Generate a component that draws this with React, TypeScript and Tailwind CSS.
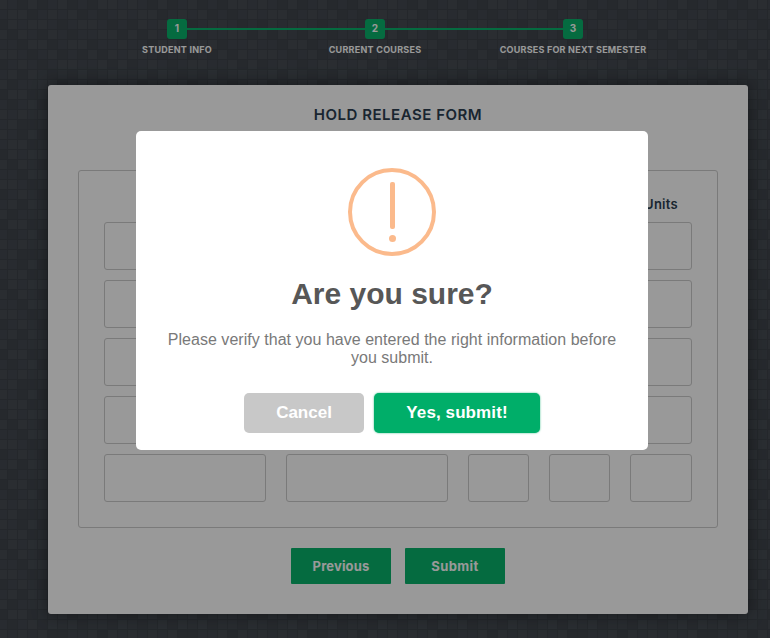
const steps = ['STUDENT INFO', 'CURRENT COURSES', 'COURSES FOR NEXT SEMESTER'];
const labelSpacing = ['tracking-[0.24px]', 'tracking-[0.25px]', 'tracking-[0.23px]'];
const rows = [0, 1, 2, 3, 4];
const fieldWidths = ['w-[162px]', 'w-[162px]', 'w-[61px]', 'w-[61px]', 'w-[62px]'];

// Square fills of the woven backdrop, one digit per 10px tile.
const weave = [
  '2102012010221',
  '1220121201012',
  '0212210122101',
  '2021021011220',
  '1102201220112',
  '2210120102021',
  '0121012211202',
  '1202101020121',
  '2011220121012',
  '0220112012210',
  '1012021201102',
  '2121200112021',
  '1200121021210',
];
const shades = ['#40454c', '#434950', '#464c53'];

function Backdrop() {
  return (
    <svg className="absolute inset-0 h-full w-full" aria-hidden="true">
      <defs>
        <pattern id="weave" x="-3" y="-1" width="130" height="130" patternUnits="userSpaceOnUse">
          <rect width="130" height="130" fill="#3c4248" />
          {weave.map((line, r) =>
            line.split('').map((v, c) => (
              <rect key={`${r}-${c}`} x={c * 10 + 1} y={r * 10 + 1} width="9" height="9" fill={shades[Number(v)]} />
            )),
          )}
        </pattern>
      </defs>
      <rect width="100%" height="100%" fill="url(#weave)" />
    </svg>
  );
}

function Progress() {
  return (
    <ol className="ml-[78px] flex w-[594px] pt-[19px]">
      {steps.map((label, i) => (
        <li key={label} className="flex w-[198px] flex-col items-center">
          <div className="flex w-full items-center">
            <span className={i === 0 ? 'h-0.5 flex-1' : 'h-0.5 flex-1 bg-[#09b26b]'} />
            <span className="flex h-5 w-5 items-center justify-center rounded-[3px] bg-[#09b26b] pb-0.5 text-[10px] leading-[18px] font-bold text-white">
              {i + 1}
            </span>
            <span className={i === 2 ? 'h-0.5 flex-1' : 'h-0.5 flex-1 bg-[#09b26b]'} />
          </div>
          <span className={`mt-1 text-[9px] leading-[14px] font-bold whitespace-nowrap text-white ${labelSpacing[i]}`}>
            {label}
          </span>
        </li>
      ))}
    </ol>
  );
}

function HoldForm() {
  return (
    <form className="mt-[28px] ml-12 h-[529px] w-[700px] rounded-[3px] bg-white px-[30px] pt-5 shadow-[0_0_15px_1px_rgba(0,0,0,0.4)]">
      <h2 className="text-center text-[15px] leading-5 font-semibold tracking-[0.52px] text-[#2c3e50]">HOLD RELEASE FORM</h2>
      <div className="mt-[45px] h-[358px] rounded-[3px] border border-[#ccc] px-[25px] pt-[23px]">
        <div className="flex justify-end">
          <span className="w-[62px] text-center text-[13px] leading-5 font-semibold tracking-[0.25px] text-[#2c3e50]">Units</span>
        </div>
        <div className="mt-2 flex flex-col gap-[10px]">
          {rows.map((row) => (
            <div key={row} className="flex justify-between">
              {fieldWidths.map((width, i) => (
                <input key={i} className={`h-12 rounded-[3px] border border-[#ccc] bg-transparent ${width}`} />
              ))}
            </div>
          ))}
        </div>
      </div>
      <div className="mt-5 flex justify-center gap-[14px]">
        <button type="button" className="h-9 w-[100px] rounded-[1px] bg-[#09b26b] pt-0.5 text-[13px] font-bold tracking-[0.15px] text-white">
          Previous
        </button>
        <button type="button" className="h-9 w-[100px] rounded-[1px] bg-[#09b26b] pt-0.5 text-[13px] font-bold tracking-[0.4px] text-white">
          Submit
        </button>
      </div>
    </form>
  );
}

function ConfirmDialog() {
  return (
    <div
      role="dialog"
      className="absolute top-[131px] left-[136px] flex h-[319px] w-[512px] flex-col items-center rounded-[5px] bg-white pt-[37px] font-['Liberation_Sans',Arial,sans-serif]"
    >
      <div className="flex h-[88px] w-[88px] flex-col items-center rounded-full border-4 border-[#fbba8c] pt-[10px]">
        <span className="h-[47px] w-[5px] rounded-[2px] bg-[#fbba8c]" />
        <span className="mt-[6px] h-[7px] w-[7px] rounded-full bg-[#fbba8c]" />
      </div>
      <h2 className="mt-[18px] text-[30px] leading-10 font-bold text-[#575757]">Are you sure?</h2>
      <p className="mt-[17px] text-center text-[16px] leading-[18px] tracking-[0.03px] text-[#797979]">
        Please verify that you have entered the right information before
        <br />
        you submit.
      </p>
      <div className="mt-[26px] flex gap-[10px]">
        <button type="button" className="h-10 w-[120px] rounded-[5px] bg-[#c8c8c8] text-[17px] font-bold text-white">
          Cancel
        </button>
        <button type="button" className="h-10 w-[166px] rounded-[5px] bg-[#00ae69] text-[17px] font-bold tracking-[0.1px] text-white shadow-[0_0_2px_rgba(0,174,105,0.8)]">
          Yes, submit!
        </button>
      </div>
    </div>
  );
}

export default function App() {
  return (
    <div className="relative h-[638px] w-[770px] overflow-hidden bg-[#42484e] font-['Inter','Open_Sans',sans-serif]">
      <Backdrop />
      <main className="relative">
        <Progress />
        <HoldForm />
      </main>
      <div className="absolute inset-0 bg-black/40" />
      <ConfirmDialog />
    </div>
  );
}
